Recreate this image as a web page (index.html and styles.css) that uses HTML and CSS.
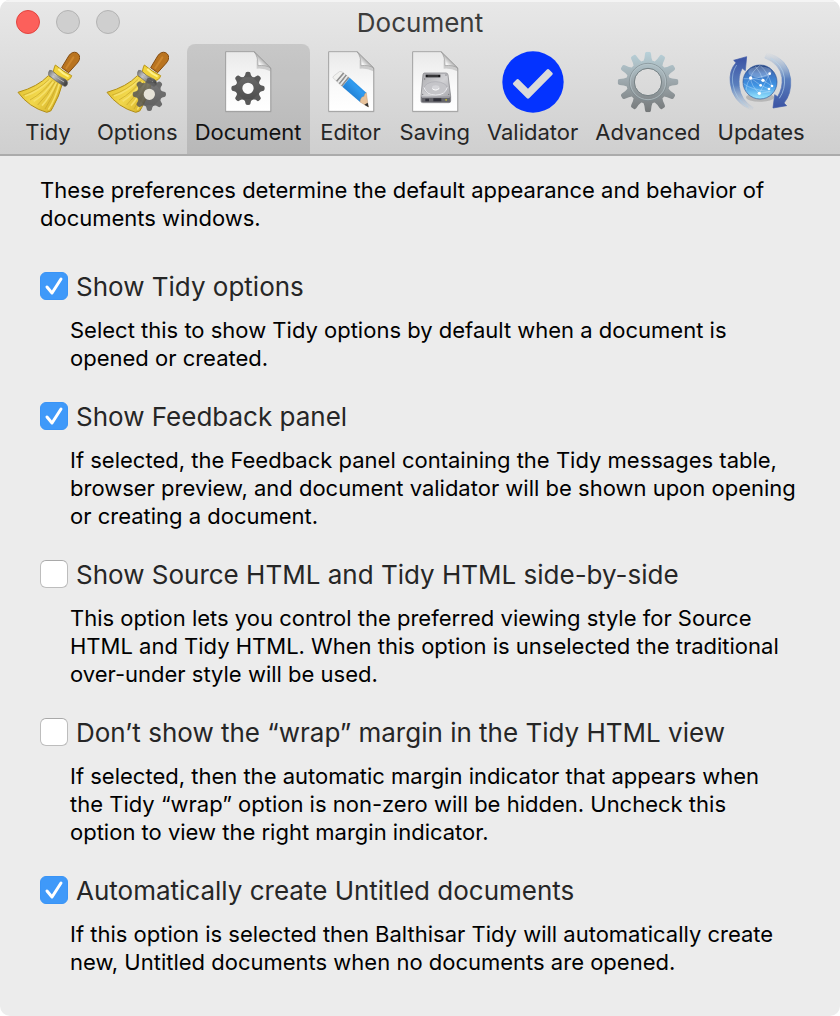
FILE: index.html
```html
<!DOCTYPE html>
<html lang="en">
<head>
<meta charset="utf-8">
<meta name="viewport" content="width=device-width, initial-scale=1">
<title>Document</title>
<link rel="stylesheet" href="styles.css">
</head>
<body>
<svg class="defs" aria-hidden="true">
  <defs>
    <linearGradient id="straw" x1="0" y1="0" x2="1" y2="0.5">
      <stop offset="0" stop-color="#dfbc2c"/><stop offset=".55" stop-color="#f2d84c"/><stop offset="1" stop-color="#d9b62c"/>
    </linearGradient>
    <linearGradient id="band" x1="0" y1="0" x2="1" y2=".7">
      <stop offset="0" stop-color="#666"/><stop offset=".35" stop-color="#c6c6c8"/><stop offset=".7" stop-color="#77787a"/><stop offset="1" stop-color="#444"/>
    </linearGradient>
    <linearGradient id="paper" x1="0" y1="0" x2="0" y2="1">
      <stop offset="0" stop-color="#e9e9e9"/><stop offset=".6" stop-color="#fafafa"/><stop offset="1" stop-color="#fff"/>
    </linearGradient>
    <linearGradient id="fold" x1="0" y1="1" x2="1" y2="0">
      <stop offset="0" stop-color="#fff"/><stop offset=".3" stop-color="#f4f4f4"/><stop offset=".5" stop-color="#b5b5b5"/><stop offset="1" stop-color="#ddd"/>
    </linearGradient>
    <linearGradient id="dark" gradientUnits="userSpaceOnUse" x1="0" y1="-50" x2="0" y2="50">
      <stop offset="0" stop-color="#6e6e6e"/><stop offset="1" stop-color="#474747"/>
    </linearGradient>
    <linearGradient id="steel" gradientUnits="userSpaceOnUse" x1="0" y1="-92" x2="0" y2="92">
      <stop offset="0" stop-color="#b9d2da"/><stop offset=".45" stop-color="#a0abb0"/><stop offset="1" stop-color="#747778"/>
    </linearGradient>
    <linearGradient id="pencil" x1="0" y1="1" x2="1" y2="0">
      <stop offset="0" stop-color="#1667b4"/><stop offset=".4" stop-color="#2688dc"/><stop offset=".6" stop-color="#2f9bf0"/><stop offset="1" stop-color="#1b72c4"/>
    </linearGradient>
    <linearGradient id="drive" x1="0" y1="0" x2="1" y2="1">
      <stop offset="0" stop-color="#a9a9ad"/><stop offset=".5" stop-color="#d2d2d5"/><stop offset="1" stop-color="#9d9da2"/>
    </linearGradient>
    <linearGradient id="globe" x1="0" y1="0" x2="0" y2="1">
      <stop offset="0" stop-color="#1c3875"/><stop offset=".25" stop-color="#3d72bf"/><stop offset=".6" stop-color="#3f94e4"/><stop offset="1" stop-color="#9ceaff"/>
    </linearGradient>
    <linearGradient id="arrow-left" gradientUnits="userSpaceOnUse" x1="0" y1="180" x2="0" y2="332">
      <stop offset="0" stop-color="#3e57a6"/><stop offset=".5" stop-color="#5a7fbd"/><stop offset="1" stop-color="#8fb2d8" stop-opacity="0"/>
    </linearGradient>
    <linearGradient id="arrow-right" gradientUnits="userSpaceOnUse" x1="0" y1="316" x2="0" y2="158">
      <stop offset="0" stop-color="#3e57a6"/><stop offset=".5" stop-color="#5a7fbd"/><stop offset="1" stop-color="#8fb2d8" stop-opacity="0"/>
    </linearGradient>
    <g id="broom">
      <path d="M155 83 176 48Q186 33 200 38Q212 45 208 59Q206 64 202 69L176 98Z" fill="#b97420" stroke="#834b10" stroke-width="3"/>
      <path d="M169 84 190 52" stroke="#cc862e" stroke-width="6" stroke-linecap="round"/>
      <path d="M136 75Q158 94 185 107Q183 114 177 119L167 122Q145 116 130 95Q132 83 136 75Z" fill="#f1d33b" stroke="#b99517" stroke-width="3"/>
      <path d="M145 87Q160 103 176 110" fill="none" stroke="#fff189" stroke-width="6"/>
      <path d="M115 107Q84 140 24 157Q57 202 110 217Q125 216 128 203Q148 169 157 131Z" fill="url(#straw)" stroke="#b08d18" stroke-width="3" stroke-linejoin="round"/>
      <path d="M121 118Q89 154 45 168M130 125Q105 163 71 184M139 128Q119 172 96 197M148 132Q136 177 115 209" fill="none" stroke="#f6e06a" stroke-width="5"/>
      <path d="M118 118Q83 151 38 166M127 121Q99 158 60 180M135 126Q113 165 83 195M143 129Q128 172 105 207" fill="none" stroke="#c6a32b" stroke-width="2"/>
      <path d="M119 91Q114 96 116 105Q133 122 163 139Q172 140 173 128Q172 122 166 118Q141 108 126 92Z" fill="url(#band)" stroke="#666" stroke-width="2"/>
      <path d="M127 102Q142 115 162 126" fill="none" stroke="#b4b4b6" stroke-width="3"/>
    </g>
    <path id="small-tooth" d="M-13-33Q-8-38-7-47Q-6-50 0-50Q6-50 7-47Q8-38 13-33Z"/>
    <g id="small-gear" fill="url(#dark)">
      <circle r="27" fill="none" stroke="url(#dark)" stroke-width="20"/>
      <g fill="#595959">
        <use href="#small-tooth"/><use href="#small-tooth" transform="rotate(45)"/><use href="#small-tooth" transform="rotate(90)"/><use href="#small-tooth" transform="rotate(135)"/><use href="#small-tooth" transform="rotate(180)"/><use href="#small-tooth" transform="rotate(225)"/><use href="#small-tooth" transform="rotate(270)"/><use href="#small-tooth" transform="rotate(315)"/>
      </g>
    </g>
    <path id="big-tooth" d="M-15-61Q-10-67-9-85Q-8-91-4-91H4Q8-91 9-85Q10-67 15-61Z"/>
    <clipPath id="gear-shape">
      <circle r="65"/>
      <use href="#big-tooth"/><use href="#big-tooth" transform="rotate(30)"/><use href="#big-tooth" transform="rotate(60)"/><use href="#big-tooth" transform="rotate(90)"/><use href="#big-tooth" transform="rotate(120)"/><use href="#big-tooth" transform="rotate(150)"/><use href="#big-tooth" transform="rotate(180)"/><use href="#big-tooth" transform="rotate(210)"/><use href="#big-tooth" transform="rotate(240)"/><use href="#big-tooth" transform="rotate(270)"/><use href="#big-tooth" transform="rotate(300)"/><use href="#big-tooth" transform="rotate(330)"/>
    </clipPath>
    <g id="page">
      <path d="M37 37H125L175 86V217H37Z" fill="#777" opacity=".3"/>
      <path d="M38 35H123L173 84V214H38Z" fill="url(#paper)" stroke="#8b8b8b" stroke-width="2"/>
      <path d="M131 60V86Q154 84 172 94V84Z" fill="#777" opacity=".3"/>
      <path d="M123 35Q135 48 135 77Q158 74 173 84Z" fill="url(#fold)" stroke="#999" stroke-width="2"/>
    </g>
  </defs>
</svg>
<div class="window">
  <header class="chrome">
    <div class="titlebar">
      <div class="lights">
        <button class="light close" type="button" aria-label="Close"></button>
        <button class="light" type="button" aria-label="Minimize" disabled></button>
        <button class="light" type="button" aria-label="Zoom" disabled></button>
      </div>
      <h1 class="title">Document</h1>
    </div>
    <nav class="toolbar" aria-label="Preference panes">
      <button class="tab" type="button">
        <svg class="icon" viewBox="18 30 192 192" aria-hidden="true"><use href="#broom"/></svg>
        <span>Tidy</span>
      </button>
      <button class="tab" type="button">
        <svg class="icon" viewBox="18 30 192 192" aria-hidden="true"><use href="#broom"/><circle cx="151" cy="163" r="18" fill="#e6e3d8"/><g opacity=".85"><use href="#small-gear" transform="translate(151 163)"/></g></svg>
        <span>Options</span>
      </button>
      <button class="tab selected" type="button" aria-current="page">
        <svg class="icon" viewBox="9 30 192 192" aria-hidden="true"><use href="#page"/><use href="#small-gear" transform="translate(105 145)"/></svg>
        <span>Document</span>
      </button>
      <button class="tab" type="button">
        <svg class="icon" viewBox="9 30 192 192" aria-hidden="true">
          <use href="#page"/>
          <path d="M55 117Q47 113 53 108L70 95Q75 93 80 97L100 113 77 138Z" fill="#f1f1ef" stroke="#c8c8c8" stroke-width="2"/>
          <path d="M83 99 62 124M91 105 70 131M98 112 77 138" stroke="#8e8e8e" stroke-width="5"/>
          <path d="M87 102 66 127M94 108 73 134" stroke="#e5e5e5" stroke-width="3"/>
          <path d="M101 113 151 158 133 187 79 140Z" fill="url(#pencil)"/>
          <path d="M151 158Q143 161 145 169Q133 170 132 186L157 201Z" fill="#e8c29a" stroke="#a6805f" stroke-width="1"/>
          <path d="M155 188 158 202 145 194Z" fill="#333"/>
        </svg>
        <span>Editor</span>
      </button>
      <button class="tab" type="button">
        <svg class="icon" viewBox="9 30 192 192" aria-hidden="true">
          <use href="#page"/>
          <path d="M73 99H138Q143 99 144 105L152 168V183Q152 188 147 188H68Q63 188 63 183V168L69 104Q70 99 73 99Z" fill="url(#drive)" stroke="#77777c" stroke-width="2"/>
          <path d="M64 170H151V184Q151 187 147 187H68Q64 187 64 184Z" fill="#65656b"/>
          <path d="M66 172H149" stroke="#c9c9ce" stroke-width="2"/>
          <path d="M76 176H87V184H76ZM100 175H124V184H100Z" fill="#303039"/>
          <path d="M136 177H141V182H136Z" fill="#b9b23c"/>
          <path d="M77 104H121V112H77Z" fill="#17171a"/>
          <path d="M83 108H115" stroke="#777" stroke-width="2"/>
          <ellipse cx="107" cy="145" rx="35" ry="20" fill="#c5c5c9" stroke="#aaaab0" stroke-width="2"/>
          <path d="M72 142Q78 165 107 165T142 142" fill="none" stroke="#ededf0" stroke-width="3"/>
          <ellipse cx="107" cy="143" rx="11" ry="7" fill="#d5d5d9"/>
          <path d="M97 146Q107 155 118 145" fill="none" stroke="#fff" stroke-width="3"/>
          <g fill="#77777c"><circle cx="74" cy="117" r="2"/><circle cx="138" cy="105" r="2"/><circle cx="68" cy="163" r="2"/><circle cx="146" cy="163" r="2"/></g>
        </svg>
        <span>Saving</span>
      </button>
      <button class="tab" type="button">
        <svg class="icon" viewBox="75 30 192 192" aria-hidden="true"><circle cx="171" cy="126" r="92" fill="#0433ff"/><path d="M112 134Q109 131 112 128L121 119Q125 115 129 119L156 146 212 89Q216 85 220 89L229 98Q232 101 229 104L160 174Q156 179 152 174Z" fill="#dadada"/></svg>
        <span>Validator</span>
      </button>
      <button class="tab" type="button">
        <svg class="icon" viewBox="-96 -96 192 192" aria-hidden="true">
          <g clip-path="url(#gear-shape)"><circle r="67" fill="none" stroke="url(#steel)" stroke-width="54"/></g>
          <circle r="56" fill="none" stroke="#7e8b90" stroke-width="2"/><circle r="53" fill="none" stroke="#bac7cb" stroke-width="2"/><circle r="41" fill="none" stroke="#758083" stroke-width="3"/>
        </svg>
        <span>Advanced</span>
      </button>
      <button class="tab" type="button">
        <svg class="icon" viewBox="66 150 192 192" aria-hidden="true">
          <ellipse cx="159" cy="292" rx="42" ry="13" fill="#777" opacity=".35"/>
          <path d="M119 170 80 181 87 188Q65 212 70 250Q76 306 134 332L139 323Q101 300 97 260Q93 226 106 205L115 212Z" fill="url(#arrow-left)" stroke="url(#arrow-left)" stroke-width="2"/>
          <path d="M89 195Q73 218 77 249Q84 297 124 322" fill="none" stroke="#a9cbe8" stroke-width="3" opacity=".6"/>
          <path d="M198 324 203 284 212 290Q228 264 225 233Q219 191 173 174L180 158Q244 174 251 237Q254 282 231 309L239 317Z" fill="url(#arrow-right)" stroke="url(#arrow-right)" stroke-width="2"/>
          <path d="M217 295Q236 267 232 232Q226 193 190 174" fill="none" stroke="#b7d6ed" stroke-width="3" opacity=".65"/>
          <circle cx="159" cy="246" r="51" fill="url(#globe)" stroke="#31579b" stroke-width="2"/>
          <ellipse cx="159" cy="216" rx="35" ry="17" fill="#fff" opacity=".25"/>
          <path d="M110 236Q151 239 188 221M131 234 168 241 195 258 186 267 161 256 131 234M188 221Q172 254 157 280M131 234Q132 257 157 280L190 275M159 196Q133 216 131 234Q119 246 117 270M159 196Q184 218 195 258M168 241Q162 218 145 199M110 251Q130 269 190 275" fill="none" stroke="#d4ebff" stroke-width="2" opacity=".55"/>
          <g fill="#fff"><circle cx="131" cy="234" r="5"/><circle cx="168" cy="241" r="5"/><circle cx="161" cy="256" r="4"/><circle cx="188" cy="221" r="4"/><circle cx="195" cy="258" r="4"/><circle cx="186" cy="267" r="4"/><circle cx="157" cy="280" r="5"/></g>
        </svg>
        <span>Updates</span>
      </button>
    </nav>
  </header>
  <main class="content">
    <p class="intro">These preferences determine the default appearance and behavior of documents windows.</p>
    <section class="option">
      <label class="choice"><span class="box"><input type="checkbox" checked aria-describedby="d1"><svg class="tick" viewBox="0 0 28 28" aria-hidden="true"><path d="M7 15 12 21 21 7"/></svg></span><span>Show Tidy options</span></label>
      <p class="detail" id="d1">Select this to show Tidy options by default when a document is opened or created.</p>
    </section>
    <section class="option">
      <label class="choice"><span class="box"><input type="checkbox" checked aria-describedby="d2"><svg class="tick" viewBox="0 0 28 28" aria-hidden="true"><path d="M7 15 12 21 21 7"/></svg></span><span>Show Feedback panel</span></label>
      <p class="detail" id="d2">If selected, the Feedback panel containing the Tidy messages table, browser preview, and document validator will be shown upon opening or creating a document.</p>
    </section>
    <section class="option">
      <label class="choice"><span class="box"><input type="checkbox" aria-describedby="d3"><svg class="tick" viewBox="0 0 28 28" aria-hidden="true"><path d="M7 15 12 21 21 7"/></svg></span><span>Show Source HTML and Tidy HTML side-by-side</span></label>
      <p class="detail" id="d3">This option lets you control the preferred viewing style for Source HTML and Tidy HTML. When this option is unselected the traditional over-under style will be used.</p>
    </section>
    <section class="option">
      <label class="choice"><span class="box"><input type="checkbox" aria-describedby="d4"><svg class="tick" viewBox="0 0 28 28" aria-hidden="true"><path d="M7 15 12 21 21 7"/></svg></span><span>Don’t show the “wrap” margin in the Tidy HTML view</span></label>
      <p class="detail" id="d4">If selected, then the automatic margin indicator that appears when<br>the Tidy “wrap” option is non-zero will be hidden. Uncheck this<br>option to view the right margin indicator.</p>
    </section>
    <section class="option">
      <label class="choice"><span class="box"><input type="checkbox" checked aria-describedby="d5"><svg class="tick" viewBox="0 0 28 28" aria-hidden="true"><path d="M7 15 12 21 21 7"/></svg></span><span>Automatically create Untitled documents</span></label>
      <p class="detail" id="d5">If this option is selected then Balthisar Tidy will automatically create new, Untitled documents when no documents are opened.</p>
    </section>
  </main>
</div>
</body>
</html>
```
FILE: styles.css
```css
* { box-sizing: border-box; }
body {
  margin: 0;
  background: #fff;
  color: #000;
  font: 22px/28px Inter, "Liberation Sans", sans-serif;
}
h1, p { margin: 0; }
button { font: inherit; }
.defs { position: absolute; width: 0; height: 0; }
.window {
  min-height: 100vh;
  border-radius: 10px;
  overflow: hidden;
  background: #ececec;
}
.chrome {
  border-bottom: 2px solid #ababab;
  background: linear-gradient(#e8e8e8, #cfcfcf);
  box-shadow: inset 0 2px #f4f4f4;
}
.titlebar {
  display: grid;
  grid-template-columns: 1fr auto 1fr;
  align-items: start;
  padding: 10px 16px 8px;
}
.lights { display: flex; gap: 16px; }
.light {
  width: 24px;
  height: 24px;
  padding: 0;
  border: 1px solid #b3b3b3;
  border-radius: 50%;
  background: #cfcfcf;
}
.close { border-color: #e2443f; background: #fc605b; }
.title { color: #3c3c3c; font-size: 26px; line-height: 26px; font-weight: 400; }
.toolbar { display: flex; gap: 1px; padding: 0 8px; }
.tab {
  display: flex;
  flex-direction: column;
  align-items: center;
  gap: 4px;
  padding: 6px 8px 8px;
  border: 0;
  border-radius: 8px 8px 0 0;
  background: none;
  color: #262626;
}
.selected { background: rgb(0 0 0 / 11%); color: #111; }
.icon { display: block; width: 64px; height: 64px; }
.content { padding: 20px 40px 40px; }
.intro { margin-bottom: 40px; }
.option { margin-bottom: 30px; }
.option:last-child { margin-bottom: 0; }
.choice {
  display: flex;
  align-items: flex-start;
  gap: 8px;
  color: #262626;
  font-size: 26px;
  line-height: 30px;
}
.box { display: grid; flex: none; width: 28px; height: 28px; }
.box > * { grid-area: 1 / 1; }
.box input {
  appearance: none;
  width: 28px;
  height: 28px;
  margin: 0;
  border: 1px solid #bdbdbd;
  border-top-color: #a9a9a9;
  border-radius: 6px;
  background: #fff;
}
.box input:checked { border-color: #3a94f6; background: #3f99f9; }
.tick {
  z-index: 1;
  visibility: hidden;
  fill: none;
  stroke: #fff;
  stroke-width: 3;
  stroke-linecap: round;
  stroke-linejoin: round;
  pointer-events: none;
}
.box input:checked + .tick { visibility: visible; }
.detail { margin-top: 14px; padding-left: 30px; }
```
